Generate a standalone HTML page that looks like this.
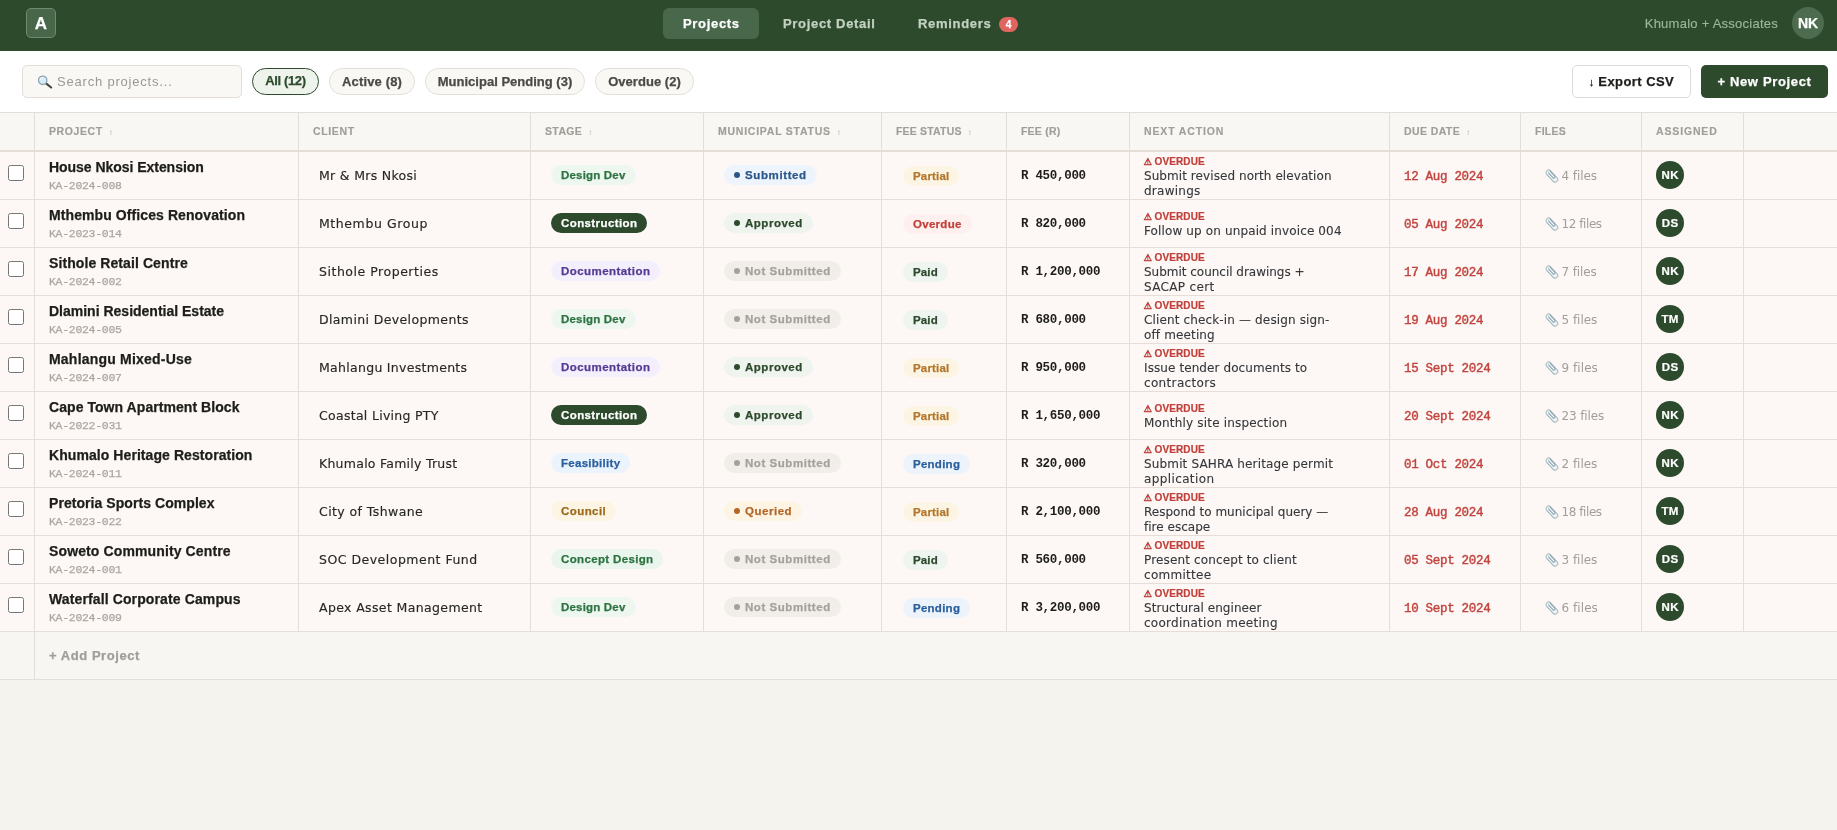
<!DOCTYPE html>
<html lang="en">
<head>
<meta charset="utf-8">
<title>Projects — Khumalo + Associates</title>
<style>
*{box-sizing:border-box;margin:0;padding:0}
html,body{width:1837px;height:830px;overflow:hidden}
body{background:#f5f3ee;font-family:"Liberation Sans","DejaVu Sans",sans-serif;color:#1d1d1b;font-size:13px;position:relative}
.mono{font-family:"Liberation Mono","DejaVu Sans Mono",monospace}
/* NAV */
.nav,.bar,table{will-change:transform}
.tab,.chip,.btn,.logo,.me,.badge,tr.add td{-webkit-text-stroke:.25px currentColor}
th{-webkit-text-stroke:.15px currentColor}
.nav{position:absolute;left:0;top:0;width:1837px;height:51px;background:#2d4a2d}
.logo{position:absolute;left:26px;top:8px;width:30px;height:30px;border-radius:5px;background:#48674a;border:1px solid #6f8a70;color:#fff;font-weight:700;font-size:17px;line-height:30px;text-align:center}
.tab{position:absolute;top:8px;height:31px;line-height:31px;font-weight:700;font-size:13px;color:#c3d2c0;white-space:nowrap}
.tab.on{left:663px;width:96px;text-indent:.7px;background:#49684b;border-radius:6px;color:#fff;text-align:center}
.badge{position:absolute;left:999px;top:17px;width:19px;height:15px;border-radius:8px;background:#e0645f;color:#fff;font-size:10px;font-weight:700;line-height:15px;text-align:center}
.org{-webkit-text-stroke:.15px currentColor;position:absolute;top:8px;height:31px;line-height:31px;right:59px;color:#9cb59b;font-size:13px;white-space:nowrap}
.me{position:absolute;left:1792px;top:7px;width:32px;height:32px;border-radius:50%;background:#4d6b4e;color:#fff;font-weight:700;font-size:14px;line-height:32px;text-align:center}
/* TOOLBAR */
.bar{position:absolute;left:0;top:51px;width:1837px;height:62px;background:#fff;border-bottom:1px solid #e3dfd8}
.search{position:absolute;left:22px;top:14px;width:220px;height:33px;border:1px solid #e3dfd8;border-radius:5px;background:#faf8f5;color:#9a9892;font-size:13px;line-height:31px;padding-left:34px}
.search svg{position:absolute;left:14px;top:9px}
.chip{position:absolute;top:17px;height:27px;line-height:25px;border:1px solid #e3dfd8;border-radius:14px;background:#faf8f5;color:#4a4a46;font-weight:700;font-size:13px;text-align:center;white-space:nowrap}
.chip.on{border:1.5px solid #2d4a2d;background:#eef3ec;color:#2d4a2d;line-height:24px}
.btn{position:absolute;top:14px;height:33px;line-height:31px;border-radius:5px;font-weight:700;font-size:13px;text-align:center;white-space:nowrap}
.ar{font-size:11px;margin-right:4px;font-weight:400;vertical-align:0}
.btn.ex{left:1572px;width:119px;border:1px solid #dedbd6;background:#fff;color:#1d1d1b}
.btn.np{left:1701px;width:127px;background:#2d4a2d;color:#fff;line-height:33px}
/* TABLE */
table{position:absolute;left:0;top:113px;width:1837px;border-collapse:separate;border-spacing:0;table-layout:fixed}
th{height:39px;background:#f9f7f4;border-bottom:2px solid #e3dfd8;border-right:1px solid #e3dfd8;text-align:left;padding:0 0 2px 14px;font-size:10.5px;font-weight:700;color:#a09e98;white-space:nowrap}
th:last-child,td:last-child{border-right:0}
th .s{font-size:8px;color:#cfccc5;margin-left:6px;letter-spacing:0}
td{height:48px;border-bottom:1px solid #e6ddd8;border-right:1px solid #e6ddd8;background:#fdf8f6;vertical-align:top;padding:0;white-space:nowrap;overflow:hidden}
.cb{display:block;width:16px;height:16px;border:1px solid #767676;border-radius:2.5px;background:#fff;margin:13px 0 0 8px}
.pn{-webkit-text-stroke:.25px currentColor;font-weight:700;font-size:14px;color:#1d1d1b;margin:7px 0 0 14px;line-height:17px}
.pc{font-family:"Liberation Mono","DejaVu Sans Mono",monospace;font-size:11.5px;letter-spacing:-.3px;color:#a9a69f;margin-left:14px;line-height:14px;margin-top:3px;-webkit-text-stroke:.25px currentColor}
.cl{display:block;font-family:"DejaVu Sans","Liberation Sans",sans-serif;margin:16px 0 0 20px;font-size:12.5px;line-height:16px;color:#272725;-webkit-text-stroke:.15px currentColor}
.pill{-webkit-text-stroke:.25px currentColor;display:inline-block;height:20px;line-height:20px;border-radius:10px;padding:0 10px;font-size:11.5px;font-weight:700;margin:13px 0 0 20px;vertical-align:top}
.st-dd{background:#edf7ef;color:#2c7340}
.st-con{background:#2d4a2d;color:#fff}
.st-doc{background:#f3effc;color:#553a93}
.st-fea{background:#ebf3fc;color:#2a5f9e}
.st-cou{background:#fdf5e3;color:#9c6a1f}
.st-cd{background:#eaf6ed;color:#2c7340}
.mu i{display:inline-block;width:6px;height:6px;border-radius:50%;margin-right:5px;vertical-align:1px;background:currentColor}
.mu-sub{background:#eef4fb;color:#2b5689}
.mu-app{background:#f0f4ef;color:#2d4a2d}
.mu-ns{background:#f1eeea;color:#a3a19a}
.mu-que{background:#fdf4e4;color:#b3672a}
.fe{margin:14px 0 0 21px}
.fe-partial{background:#fdf5e4;color:#b3772e}
.fe-overdue{background:#fdf0ee;color:#c2403b}
.fe-paid{background:#eef4f0;color:#2d4a2d}
.fe-pending{background:#ecf3fb;color:#2a5f9e}
.amt{display:block;font-family:"Liberation Mono","DejaVu Sans Mono",monospace;font-weight:700;font-size:12.5px;letter-spacing:-.3px;line-height:16px;color:#1d1d1b;margin:16px 0 0 14px}
.na{margin:2px 0 0 14px}.na.one{margin-top:9px}
.od{-webkit-text-stroke:.2px currentColor;position:relative;top:1px;color:#c2403b;font-weight:700;font-size:10px;line-height:14px;letter-spacing:.12px}
.od .w{font-family:"DejaVu Sans",sans-serif;font-size:9.5px;font-weight:700;display:inline-block;width:11px;letter-spacing:0;-webkit-text-stroke:.5px currentColor;margin-left:-.5px}
.at{margin-top:1px;font-family:"DejaVu Sans","Liberation Sans",sans-serif;font-size:12px;line-height:15px;color:#36373a;-webkit-text-stroke:.12px currentColor}.ln{display:block}
.due{display:block;font-family:"Liberation Mono","DejaVu Sans Mono",monospace;font-weight:400;-webkit-text-stroke:.4px currentColor;font-size:12.5px;letter-spacing:-.3px;line-height:16px;color:#c0443f;margin:17px 0 0 14px}
.fl{margin:16px 0 0 23.5px;font-family:"DejaVu Sans","Liberation Sans",sans-serif;color:#a09e98;font-size:12px;line-height:16px;display:block}
.fl svg{vertical-align:-3px;margin-right:3px;margin-left:0}
.av{display:block;width:28px;height:28px;border-radius:50%;background:#2d4a2d;color:#fff;font-weight:700;font-size:11.5px;letter-spacing:.3px;text-indent:.3px;-webkit-text-stroke:.2px currentColor;line-height:28px;text-align:center;margin:9px 0 0 14px}
tr.add td{vertical-align:middle;background:#f8f6f2;border-bottom:1px solid #e3dfd8;border-right:0;color:#a09e98;font-weight:700;font-size:13px}
tr.add td.c0{border-right:1px solid #e3dfd8}
</style>
</head>
<body>
<div class="nav">
  <div class="logo">A</div>
  <div class="tab on"><span class="f" id="tab_projects" style="letter-spacing:0.69px">Projects</span></div>
  <div class="tab" style="left:783px"><span class="f" id="tab_detail" style="letter-spacing:0.68px">Project Detail</span></div>
  <div class="tab" style="left:918px"><span class="f" id="tab_rem" style="letter-spacing:0.69px">Reminders</span></div>
  <div class="badge">4</div>
  <div class="org"><span class="f" id="org" style="letter-spacing:0.25px">Khumalo + Associates</span></div>
  <div class="me">NK</div>
</div>
<div class="bar">
  <div class="search"><svg width="16" height="14" viewBox="0 0 16 14"><path d="M9 8.4 L14.2 12.5" stroke="#3f4447" stroke-width="2.1" stroke-linecap="round"/><circle cx="5.7" cy="5.3" r="4.2" fill="#d6ecf8" stroke="#93a4ae" stroke-width="1.3"/><path d="M3.2 4.6 a2.8 2.8 0 0 1 2.2 -2" fill="none" stroke="#fff" stroke-width=".9" stroke-linecap="round"/></svg><span class="f" id="search" style="letter-spacing:0.80px">Search projects...</span></div>
  <div class="chip on" style="left:252px;width:67px"><span class="f" id="chip1" style="letter-spacing:-0.37px">All (12)</span></div>
  <div class="chip" style="left:329px;width:86px"><span class="f" id="chip2" style="letter-spacing:0.15px">Active (8)</span></div>
  <div class="chip" style="left:425px;width:160px"><span class="f" id="chip3" style="letter-spacing:0.01px">Municipal Pending (3)</span></div>
  <div class="chip" style="left:595px;width:99px"><span class="f" id="chip4" style="letter-spacing:0.04px">Overdue (2)</span></div>
  <div class="btn ex"><span class="ar">↓</span><span class="f" id="btn_ex" style="letter-spacing:0.44px">Export CSV</span></div>
  <div class="btn np"><span class="f" id="btn_np" style="letter-spacing:0.65px">+ New Project</span></div>
</div>
<table>
<colgroup><col style="width:35px"><col style="width:264px"><col style="width:232px"><col style="width:173px"><col style="width:178px"><col style="width:125px"><col style="width:123px"><col style="width:260px"><col style="width:131px"><col style="width:121px"><col style="width:102px"><col></colgroup>
<thead><tr>
<th></th><th><span class="f" id="hd_project" style="letter-spacing:0.58px">PROJECT</span><span class="s">↕</span></th><th><span class="f" id="hd_client" style="letter-spacing:0.63px">CLIENT</span></th><th><span class="f" id="hd_stage" style="letter-spacing:0.37px">STAGE</span><span class="s">↕</span></th><th><span class="f" id="hd_muni" style="letter-spacing:0.75px">MUNICIPAL STATUS</span><span class="s">↕</span></th><th><span class="f" id="hd_feest" style="letter-spacing:0.19px">FEE STATUS</span><span class="s">↕</span></th><th><span class="f" id="hd_fee" style="letter-spacing:0.21px">FEE (R)</span></th><th><span class="f" id="hd_next" style="letter-spacing:0.85px">NEXT ACTION</span></th><th><span class="f" id="hd_due" style="letter-spacing:0.40px">DUE DATE</span><span class="s">↕</span></th><th><span class="f" id="hd_files" style="letter-spacing:0.23px">FILES</span></th><th><span class="f" id="hd_assigned" style="letter-spacing:0.85px">ASSIGNED</span></th><th></th>
</tr></thead>
<tbody>
<tr>
<td class="c0"><span class="cb"></span></td>
<td class="c1"><div class="pn"><span style="letter-spacing:-0.04px">House Nkosi Extension</span></div><div class="pc">KA-2024-008</div></td>
<td class="c2"><span class="cl" style="letter-spacing:0.31px">Mr & Mrs Nkosi</span></td>
<td class="c3"><span class="pill st st-dd"><span style="letter-spacing:0.19px">Design Dev</span></span></td>
<td class="c4"><span class="pill mu mu-sub"><i></i><span style="letter-spacing:0.61px">Submitted</span></span></td>
<td class="c5"><span class="pill fe fe-partial"><span style="letter-spacing:0.18px">Partial</span></span></td>
<td class="c6"><span class="amt">R 450,000</span></td>
<td class="c7"><div class="na two"><div class="od"><b class="w">⚠</b>OVERDUE</div><div class="at"><span class="ln" style="letter-spacing:0.07px">Submit revised north elevation</span><span class="ln" style="letter-spacing:0.25px">drawings</span></div></div></td>
<td class="c8"><span class="due">12 Aug 2024</span></td>
<td class="c9"><span class="fl"><svg class="clip" viewBox="0 0 14 14" width="14" height="14"><g transform="translate(6.9,7.1) rotate(-43)" fill="none" opacity=".85"><rect x="-2.6" y="-7.2" width="5.2" height="14.4" rx="2.6" fill="#f1f8fa" stroke="#9db3b8" stroke-width="1.15"/><path d="M-0.3 -4.6 V2 a1.15 1.15 0 0 0 2.3 0 V-4.9" stroke="#7f96a4" stroke-width="1.1" stroke-linecap="round"/></g></svg><span style="letter-spacing:-0.07px">4 files</span></span></td>
<td class="c10"><span class="av">NK</span></td>
<td class="c11"></td>
</tr>
<tr>
<td class="c0"><span class="cb"></span></td>
<td class="c1"><div class="pn"><span style="letter-spacing:0.09px">Mthembu Offices Renovation</span></div><div class="pc">KA-2023-014</div></td>
<td class="c2"><span class="cl" style="letter-spacing:0.58px">Mthembu Group</span></td>
<td class="c3"><span class="pill st st-con"><span style="letter-spacing:0.40px">Construction</span></span></td>
<td class="c4"><span class="pill mu mu-app"><i></i><span style="letter-spacing:0.52px">Approved</span></span></td>
<td class="c5"><span class="pill fe fe-overdue"><span style="letter-spacing:0.29px">Overdue</span></span></td>
<td class="c6"><span class="amt">R 820,000</span></td>
<td class="c7"><div class="na one"><div class="od"><b class="w">⚠</b>OVERDUE</div><div class="at"><span class="ln" style="letter-spacing:0.13px">Follow up on unpaid invoice 004</span></div></div></td>
<td class="c8"><span class="due">05 Aug 2024</span></td>
<td class="c9"><span class="fl"><svg class="clip" viewBox="0 0 14 14" width="14" height="14"><g transform="translate(6.9,7.1) rotate(-43)" fill="none" opacity=".85"><rect x="-2.6" y="-7.2" width="5.2" height="14.4" rx="2.6" fill="#f1f8fa" stroke="#9db3b8" stroke-width="1.15"/><path d="M-0.3 -4.6 V2 a1.15 1.15 0 0 0 2.3 0 V-4.9" stroke="#7f96a4" stroke-width="1.1" stroke-linecap="round"/></g></svg><span style="letter-spacing:-0.43px">12 files</span></span></td>
<td class="c10"><span class="av">DS</span></td>
<td class="c11"></td>
</tr>
<tr>
<td class="c0"><span class="cb"></span></td>
<td class="c1"><div class="pn"><span style="letter-spacing:0.09px">Sithole Retail Centre</span></div><div class="pc">KA-2024-002</div></td>
<td class="c2"><span class="cl" style="letter-spacing:0.53px">Sithole Properties</span></td>
<td class="c3"><span class="pill st st-doc"><span style="letter-spacing:0.44px">Documentation</span></span></td>
<td class="c4"><span class="pill mu mu-ns"><i></i><span style="letter-spacing:0.55px">Not Submitted</span></span></td>
<td class="c5"><span class="pill fe fe-paid"><span style="letter-spacing:0.14px">Paid</span></span></td>
<td class="c6"><span class="amt">R 1,200,000</span></td>
<td class="c7"><div class="na two"><div class="od"><b class="w">⚠</b>OVERDUE</div><div class="at"><span class="ln" style="letter-spacing:-0.02px">Submit council drawings +</span><span class="ln" style="letter-spacing:0.35px">SACAP cert</span></div></div></td>
<td class="c8"><span class="due">17 Aug 2024</span></td>
<td class="c9"><span class="fl"><svg class="clip" viewBox="0 0 14 14" width="14" height="14"><g transform="translate(6.9,7.1) rotate(-43)" fill="none" opacity=".85"><rect x="-2.6" y="-7.2" width="5.2" height="14.4" rx="2.6" fill="#f1f8fa" stroke="#9db3b8" stroke-width="1.15"/><path d="M-0.3 -4.6 V2 a1.15 1.15 0 0 0 2.3 0 V-4.9" stroke="#7f96a4" stroke-width="1.1" stroke-linecap="round"/></g></svg><span style="letter-spacing:-0.13px">7 files</span></span></td>
<td class="c10"><span class="av">NK</span></td>
<td class="c11"></td>
</tr>
<tr>
<td class="c0"><span class="cb"></span></td>
<td class="c1"><div class="pn"><span style="letter-spacing:0.00px">Dlamini Residential Estate</span></div><div class="pc">KA-2024-005</div></td>
<td class="c2"><span class="cl" style="letter-spacing:0.37px">Dlamini Developments</span></td>
<td class="c3"><span class="pill st st-dd"><span style="letter-spacing:0.19px">Design Dev</span></span></td>
<td class="c4"><span class="pill mu mu-ns"><i></i><span style="letter-spacing:0.55px">Not Submitted</span></span></td>
<td class="c5"><span class="pill fe fe-paid"><span style="letter-spacing:0.14px">Paid</span></span></td>
<td class="c6"><span class="amt">R 680,000</span></td>
<td class="c7"><div class="na two"><div class="od"><b class="w">⚠</b>OVERDUE</div><div class="at"><span class="ln" style="letter-spacing:0.14px">Client check-in — design sign-</span><span class="ln" style="letter-spacing:0.14px">off meeting</span></div></div></td>
<td class="c8"><span class="due">19 Aug 2024</span></td>
<td class="c9"><span class="fl"><svg class="clip" viewBox="0 0 14 14" width="14" height="14"><g transform="translate(6.9,7.1) rotate(-43)" fill="none" opacity=".85"><rect x="-2.6" y="-7.2" width="5.2" height="14.4" rx="2.6" fill="#f1f8fa" stroke="#9db3b8" stroke-width="1.15"/><path d="M-0.3 -4.6 V2 a1.15 1.15 0 0 0 2.3 0 V-4.9" stroke="#7f96a4" stroke-width="1.1" stroke-linecap="round"/></g></svg><span style="letter-spacing:-0.03px">5 files</span></span></td>
<td class="c10"><span class="av">TM</span></td>
<td class="c11"></td>
</tr>
<tr>
<td class="c0"><span class="cb"></span></td>
<td class="c1"><div class="pn"><span style="letter-spacing:0.21px">Mahlangu Mixed-Use</span></div><div class="pc">KA-2024-007</div></td>
<td class="c2"><span class="cl" style="letter-spacing:0.29px">Mahlangu Investments</span></td>
<td class="c3"><span class="pill st st-doc"><span style="letter-spacing:0.44px">Documentation</span></span></td>
<td class="c4"><span class="pill mu mu-app"><i></i><span style="letter-spacing:0.52px">Approved</span></span></td>
<td class="c5"><span class="pill fe fe-partial"><span style="letter-spacing:0.18px">Partial</span></span></td>
<td class="c6"><span class="amt">R 950,000</span></td>
<td class="c7"><div class="na two"><div class="od"><b class="w">⚠</b>OVERDUE</div><div class="at"><span class="ln" style="letter-spacing:0.09px">Issue tender documents to</span><span class="ln" style="letter-spacing:0.34px">contractors</span></div></div></td>
<td class="c8"><span class="due">15 Sept 2024</span></td>
<td class="c9"><span class="fl"><svg class="clip" viewBox="0 0 14 14" width="14" height="14"><g transform="translate(6.9,7.1) rotate(-43)" fill="none" opacity=".85"><rect x="-2.6" y="-7.2" width="5.2" height="14.4" rx="2.6" fill="#f1f8fa" stroke="#9db3b8" stroke-width="1.15"/><path d="M-0.3 -4.6 V2 a1.15 1.15 0 0 0 2.3 0 V-4.9" stroke="#7f96a4" stroke-width="1.1" stroke-linecap="round"/></g></svg><span style="letter-spacing:0.06px">9 files</span></span></td>
<td class="c10"><span class="av">DS</span></td>
<td class="c11"></td>
</tr>
<tr>
<td class="c0"><span class="cb"></span></td>
<td class="c1"><div class="pn"><span style="letter-spacing:0.06px">Cape Town Apartment Block</span></div><div class="pc">KA-2022-031</div></td>
<td class="c2"><span class="cl" style="letter-spacing:0.29px">Coastal Living PTY</span></td>
<td class="c3"><span class="pill st st-con"><span style="letter-spacing:0.40px">Construction</span></span></td>
<td class="c4"><span class="pill mu mu-app"><i></i><span style="letter-spacing:0.52px">Approved</span></span></td>
<td class="c5"><span class="pill fe fe-partial"><span style="letter-spacing:0.18px">Partial</span></span></td>
<td class="c6"><span class="amt">R 1,650,000</span></td>
<td class="c7"><div class="na one"><div class="od"><b class="w">⚠</b>OVERDUE</div><div class="at"><span class="ln" style="letter-spacing:0.18px">Monthly site inspection</span></div></div></td>
<td class="c8"><span class="due">20 Sept 2024</span></td>
<td class="c9"><span class="fl"><svg class="clip" viewBox="0 0 14 14" width="14" height="14"><g transform="translate(6.9,7.1) rotate(-43)" fill="none" opacity=".85"><rect x="-2.6" y="-7.2" width="5.2" height="14.4" rx="2.6" fill="#f1f8fa" stroke="#9db3b8" stroke-width="1.15"/><path d="M-0.3 -4.6 V2 a1.15 1.15 0 0 0 2.3 0 V-4.9" stroke="#7f96a4" stroke-width="1.1" stroke-linecap="round"/></g></svg><span style="letter-spacing:-0.14px">23 files</span></span></td>
<td class="c10"><span class="av">NK</span></td>
<td class="c11"></td>
</tr>
<tr>
<td class="c0"><span class="cb"></span></td>
<td class="c1"><div class="pn"><span style="letter-spacing:0.07px">Khumalo Heritage Restoration</span></div><div class="pc">KA-2024-011</div></td>
<td class="c2"><span class="cl" style="letter-spacing:0.25px">Khumalo Family Trust</span></td>
<td class="c3"><span class="pill st st-fea"><span style="letter-spacing:0.28px">Feasibility</span></span></td>
<td class="c4"><span class="pill mu mu-ns"><i></i><span style="letter-spacing:0.55px">Not Submitted</span></span></td>
<td class="c5"><span class="pill fe fe-pending"><span style="letter-spacing:0.26px">Pending</span></span></td>
<td class="c6"><span class="amt">R 320,000</span></td>
<td class="c7"><div class="na two"><div class="od"><b class="w">⚠</b>OVERDUE</div><div class="at"><span class="ln" style="letter-spacing:0.15px">Submit SAHRA heritage permit</span><span class="ln" style="letter-spacing:0.38px">application</span></div></div></td>
<td class="c8"><span class="due">01 Oct 2024</span></td>
<td class="c9"><span class="fl"><svg class="clip" viewBox="0 0 14 14" width="14" height="14"><g transform="translate(6.9,7.1) rotate(-43)" fill="none" opacity=".85"><rect x="-2.6" y="-7.2" width="5.2" height="14.4" rx="2.6" fill="#f1f8fa" stroke="#9db3b8" stroke-width="1.15"/><path d="M-0.3 -4.6 V2 a1.15 1.15 0 0 0 2.3 0 V-4.9" stroke="#7f96a4" stroke-width="1.1" stroke-linecap="round"/></g></svg><span style="letter-spacing:-0.03px">2 files</span></span></td>
<td class="c10"><span class="av">NK</span></td>
<td class="c11"></td>
</tr>
<tr>
<td class="c0"><span class="cb"></span></td>
<td class="c1"><div class="pn"><span style="letter-spacing:0.06px">Pretoria Sports Complex</span></div><div class="pc">KA-2023-022</div></td>
<td class="c2"><span class="cl" style="letter-spacing:0.41px">City of Tshwane</span></td>
<td class="c3"><span class="pill st st-cou"><span style="letter-spacing:0.43px">Council</span></span></td>
<td class="c4"><span class="pill mu mu-que"><i></i><span style="letter-spacing:0.52px">Queried</span></span></td>
<td class="c5"><span class="pill fe fe-partial"><span style="letter-spacing:0.18px">Partial</span></span></td>
<td class="c6"><span class="amt">R 2,100,000</span></td>
<td class="c7"><div class="na two"><div class="od"><b class="w">⚠</b>OVERDUE</div><div class="at"><span class="ln" style="letter-spacing:0.01px">Respond to municipal query —</span><span class="ln" style="letter-spacing:0.02px">fire escape</span></div></div></td>
<td class="c8"><span class="due">28 Aug 2024</span></td>
<td class="c9"><span class="fl"><svg class="clip" viewBox="0 0 14 14" width="14" height="14"><g transform="translate(6.9,7.1) rotate(-43)" fill="none" opacity=".85"><rect x="-2.6" y="-7.2" width="5.2" height="14.4" rx="2.6" fill="#f1f8fa" stroke="#9db3b8" stroke-width="1.15"/><path d="M-0.3 -4.6 V2 a1.15 1.15 0 0 0 2.3 0 V-4.9" stroke="#7f96a4" stroke-width="1.1" stroke-linecap="round"/></g></svg><span style="letter-spacing:-0.43px">18 files</span></span></td>
<td class="c10"><span class="av">TM</span></td>
<td class="c11"></td>
</tr>
<tr>
<td class="c0"><span class="cb"></span></td>
<td class="c1"><div class="pn"><span style="letter-spacing:0.12px">Soweto Community Centre</span></div><div class="pc">KA-2024-001</div></td>
<td class="c2"><span class="cl" style="letter-spacing:0.49px">SOC Development Fund</span></td>
<td class="c3"><span class="pill st st-cd"><span style="letter-spacing:0.35px">Concept Design</span></span></td>
<td class="c4"><span class="pill mu mu-ns"><i></i><span style="letter-spacing:0.55px">Not Submitted</span></span></td>
<td class="c5"><span class="pill fe fe-paid"><span style="letter-spacing:0.14px">Paid</span></span></td>
<td class="c6"><span class="amt">R 560,000</span></td>
<td class="c7"><div class="na two"><div class="od"><b class="w">⚠</b>OVERDUE</div><div class="at"><span class="ln" style="letter-spacing:0.14px">Present concept to client</span><span class="ln" style="letter-spacing:0.28px">committee</span></div></div></td>
<td class="c8"><span class="due">05 Sept 2024</span></td>
<td class="c9"><span class="fl"><svg class="clip" viewBox="0 0 14 14" width="14" height="14"><g transform="translate(6.9,7.1) rotate(-43)" fill="none" opacity=".85"><rect x="-2.6" y="-7.2" width="5.2" height="14.4" rx="2.6" fill="#f1f8fa" stroke="#9db3b8" stroke-width="1.15"/><path d="M-0.3 -4.6 V2 a1.15 1.15 0 0 0 2.3 0 V-4.9" stroke="#7f96a4" stroke-width="1.1" stroke-linecap="round"/></g></svg><span style="letter-spacing:-0.03px">3 files</span></span></td>
<td class="c10"><span class="av">DS</span></td>
<td class="c11"></td>
</tr>
<tr>
<td class="c0"><span class="cb"></span></td>
<td class="c1"><div class="pn"><span style="letter-spacing:0.12px">Waterfall Corporate Campus</span></div><div class="pc">KA-2024-009</div></td>
<td class="c2"><span class="cl" style="letter-spacing:0.37px">Apex Asset Management</span></td>
<td class="c3"><span class="pill st st-dd"><span style="letter-spacing:0.19px">Design Dev</span></span></td>
<td class="c4"><span class="pill mu mu-ns"><i></i><span style="letter-spacing:0.55px">Not Submitted</span></span></td>
<td class="c5"><span class="pill fe fe-pending"><span style="letter-spacing:0.26px">Pending</span></span></td>
<td class="c6"><span class="amt">R 3,200,000</span></td>
<td class="c7"><div class="na two"><div class="od"><b class="w">⚠</b>OVERDUE</div><div class="at"><span class="ln" style="letter-spacing:0.05px">Structural engineer</span><span class="ln" style="letter-spacing:0.27px">coordination meeting</span></div></div></td>
<td class="c8"><span class="due">10 Sept 2024</span></td>
<td class="c9"><span class="fl"><svg class="clip" viewBox="0 0 14 14" width="14" height="14"><g transform="translate(6.9,7.1) rotate(-43)" fill="none" opacity=".85"><rect x="-2.6" y="-7.2" width="5.2" height="14.4" rx="2.6" fill="#f1f8fa" stroke="#9db3b8" stroke-width="1.15"/><path d="M-0.3 -4.6 V2 a1.15 1.15 0 0 0 2.3 0 V-4.9" stroke="#7f96a4" stroke-width="1.1" stroke-linecap="round"/></g></svg><span style="letter-spacing:0.06px">6 files</span></span></td>
<td class="c10"><span class="av">NK</span></td>
<td class="c11"></td>
</tr>
<tr class="add"><td class="c0"></td><td colspan="11"><span class="f" id="addp" style="margin-left:14px;letter-spacing:0.55px">+ Add Project</span></td></tr>
</tbody>
</table>
</body>
</html>
